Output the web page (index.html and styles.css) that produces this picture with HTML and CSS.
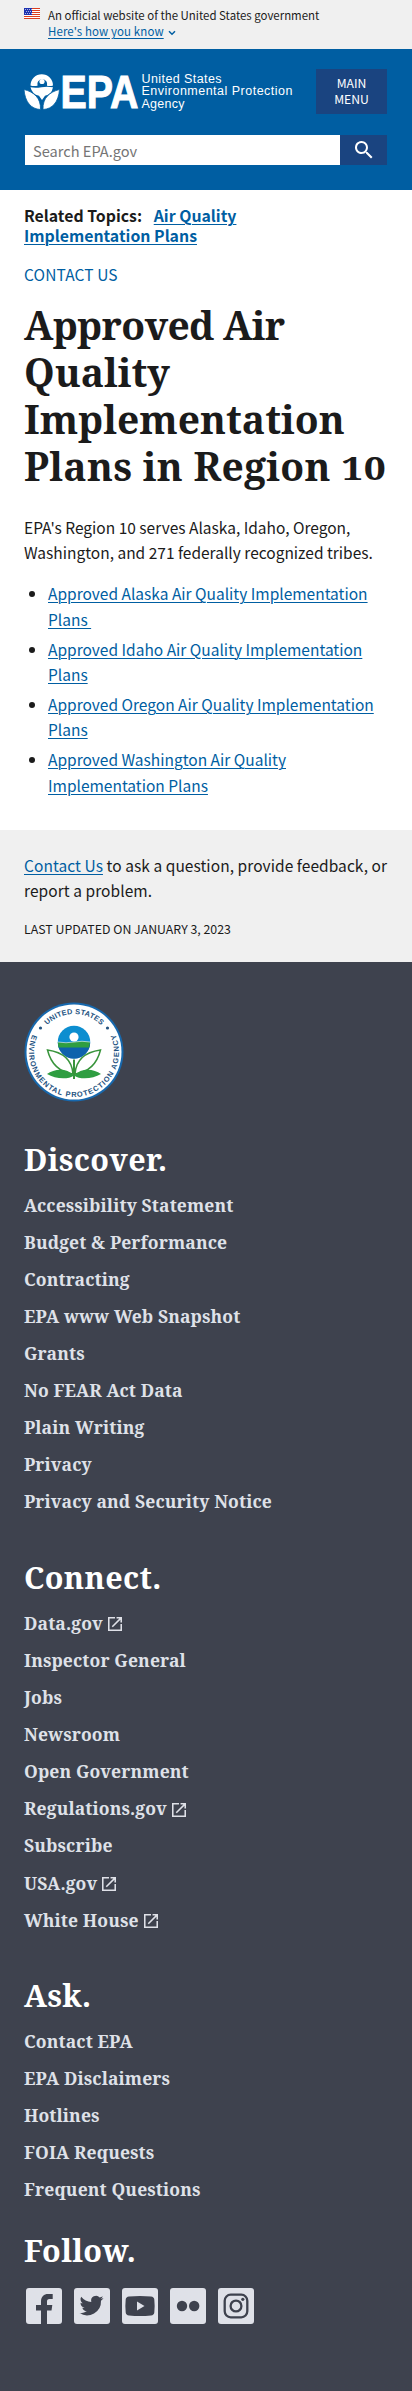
FILE: index.html
```html
<!DOCTYPE html>
<html lang="en">
<head>
<meta charset="utf-8">
<title>Approved Air Quality Implementation Plans in Region 10 | US EPA</title>
<link rel="stylesheet" href="styles.css">
</head>
<body>
<svg class="defs" aria-hidden="true">
  <symbol id="external" viewBox="3 3 18 18"><path d="M19 19H5V5h7V3H3v18h18v-9h-2v7zM14 3v2h3.600l-9.800 9.800 1.400 1.400L19 6.400V10h2V3h-7z"/></symbol>
</svg>
<section class="banner">
  <svg class="flag" viewBox="0 0 16 11">
    <path fill="#fff" d="M0 0h16v11H0z"/>
    <path fill="#db3e1f" d="M0 0h16v1H0zM0 2h16v1H0zM0 4h16v1H0zM0 6h16v1H0zM0 8h16v1H0zM0 10h16v1H0z"/>
    <path fill="#1e33b1" d="M0 0h8v7H0z"/>
    <path stroke="#fff" stroke-width=".8" stroke-dasharray=".8 1.200" d="M1 1.500h7M2 3.500h6M1 5.500h7"/>
  </svg>
  <div>
    <p>An official website of the United States government</p>
    <p><a class="know" href="#">Here's how you know</a><svg class="chev" viewBox="0 0 8 6"><path d="M1 1.300l3 3 3-3" fill="none" stroke="#005ea2" stroke-width="1.500"/></svg></p>
  </div>
</section>
<header class="header">
  <div class="top">
    <svg class="logo" viewBox="0 0 270 42">
      <g fill="#fff">
        <path d="M6.500 13.500a11 11 0 0 1 22.500 0q-3 1-6 .2a5 5 0 1 0-9.500 0q-4 .8-7-.2z"/>
        <circle cx="18" cy="9.500" r="2.600"/>
        <path d="M6.500 15.300q5 1 11-.1t11.500.100q-1.500 7.500-8 8.500L18 28l-3-4.200q-7-1.500-8.500-8.500z"/>
        <path d="M0 17.500C10 20 17 26 16.500 37.500 7 37 1 30 0 17.500zM35.500 17.500C25.500 20 18.500 26 19 37.500 28.500 37 34.500 30 35.500 17.500z" stroke="#005ea2" stroke-width=".8"/>
        <text class="word" x="36.500" y="35.500" textLength="78" lengthAdjust="spacingAndGlyphs">EPA</text>
        <g class="agency"><text x="117.500" y="10.700" textLength="80">United States</text><text x="117.500" y="23.300" textLength="151">Environmental Protection</text><text x="117.500" y="35.900" textLength="43">Agency</text></g>
      </g>
    </svg>
    <button class="menu">MAIN MENU</button>
  </div>
  <form class="search">
    <input type="text" placeholder="Search EPA.gov" aria-label="Search">
    <button type="button" aria-label="Search"><svg viewBox="0 0 24 24"><path fill="#fff" d="M15.500 14h-.8l-.3-.3A6.500 6.500 0 1 0 13.700 14.400l.3.300v.8l5 5 1.500-1.500zm-6 0a4.500 4.500 0 1 1 0-9 4.500 4.500 0 0 1 0 9z"/></svg></button>
  </form>
</header>
<main class="main">
  <p class="related">Related Topics: <a href="#">Air Quality<br>Implementation Plans</a></p>
  <p class="contact"><a href="#">CONTACT US</a></p>
  <h1><span class="tight">Approved Air</span><br>Quality<br>Implementation<br><span class="wide">Plans in Region <span class="num">10</span></span></h1>
  <p class="intro">EPA's Region 10 serves Alaska, Idaho, Oregon,<br>Washington, and 271 federally recognized tribes.</p>
  <ul class="plans">
    <li><a href="#">Approved Alaska Air Quality Implementation<br>Plans&nbsp;</a></li>
    <li><a href="#">Approved Idaho Air Quality Implementation<br>Plans</a></li>
    <li><a href="#">Approved Oregon Air Quality Implementation<br>Plans</a></li>
    <li><a href="#">Approved Washington Air Quality<br>Implementation Plans</a></li>
  </ul>
</main>
<section class="feedback">
  <p class="ask"><a href="#">Contact Us</a> to ask a question, provide feedback, or<br>report a problem.</p>
  <p class="updated">LAST UPDATED ON JANUARY 3, 2023</p>
</section>
<footer class="footer">
  <svg class="seal" viewBox="-50 -50 100 100">
    <circle r="49.500" fill="#1768ad"/><circle r="47.500" fill="#fff"/>
    <path id="arc-top" d="M-38 0A38 38 0 0 1 38 0" fill="none"/>
    <path id="arc-low" d="M-41.100-18.300A45 45 0 1 0 41.100-18.300" fill="none"/>
    <g class="ring"><text textLength="60"><textPath href="#arc-top" startOffset="29.700">UNITED STATES</textPath></text><text textLength="177"><textPath href="#arc-low" startOffset="1">ENVIRONMENTAL PROTECTION AGENCY</textPath></text></g>
    <circle cx="-33.500" cy="-24" r="1.600" fill="#24527f"/><circle cx="33.500" cy="-24" r="1.600" fill="#24527f"/>
    <circle cy="-10" r="16.200" fill="#0c8ed0"/>
    <path d="M-16.200-9.500a16.200 16.200 0 0 0 32.400 0z" fill="#0d62ac"/>
    <path d="M-16.200-10q8 1.500 16 0t16.200 0l-.9 5.500h-30.600z" fill="#2f9e41"/>
    <path d="M-16-10q8 1.500 16 0t16 0" fill="none" stroke="#fff" stroke-width=".6"/>
    <circle cy="-15" r="4.600" fill="#fff"/>
    <g fill="none" stroke="#38943b" stroke-width="1.500"><path d="M0 7.500V27" stroke-width="2"/><path d="M-1 22C-2 7-12 0-26.500-2-23 12-15 20-1 22zM1 22C2 7 12 0 26.500-2 23 12 15 20 1 22z"/></g>
    <path d="M0 23.500C-8 15-20 17-27 22c8 5 21 6 27 1.500 8-8.500 20-6.500 27-1.500-8 5-21 6-27 1.500z" fill="#2f9e41"/>
  </svg>
  <h2 class="discover">Discover.</h2>
  <ul>
    <li>Accessibility Statement</li><li>Budget &amp; Performance</li><li>Contracting</li><li>EPA www Web Snapshot</li><li>Grants</li><li>No FEAR Act Data</li><li>Plain Writing</li><li>Privacy</li><li>Privacy and Security Notice</li>
  </ul>
  <h2 class="connect">Connect.</h2>
  <ul>
    <li>Data.gov<svg class="ext"><use href="#external"/></svg></li><li>Inspector General</li><li>Jobs</li><li>Newsroom</li><li>Open Government</li><li>Regulations.gov<svg class="ext"><use href="#external"/></svg></li><li>Subscribe</li><li>USA.gov<svg class="ext"><use href="#external"/></svg></li><li>White House<svg class="ext"><use href="#external"/></svg></li>
  </ul>
  <h2 class="askus">Ask.</h2>
  <ul>
    <li>Contact EPA</li><li>EPA Disclaimers</li><li>Hotlines</li><li>FOIA Requests</li><li>Frequent Questions</li>
  </ul>
  <h2 class="follow">Follow.</h2>
  <div class="social">
    <svg viewBox="0 0 36 36"><rect width="36" height="36" rx="3" fill="#dfe1e8"/><path fill="#3e424e" d="M15 36V22.500h-5V17h5v-3.500C15 8.500 18 6 22 6h4.700v5H23.500C21.500 11 21 12 21 13.500V17h5.300l-.8 5.500H21V36z"/></svg>
    <svg viewBox="0 0 36 36"><rect width="36" height="36" rx="3" fill="#dfe1e8"/><path fill="#3e424e" transform="translate(5.500 5.500)" d="M24 4.600a10 10 0 0 1-2.800.8 4.900 4.900 0 0 0 2.100-2.700 9.800 9.800 0 0 1-3.100 1.200A4.900 4.900 0 0 0 11.800 8.400 14 14 0 0 1 1.700 3.200a4.900 4.900 0 0 0 1.500 6.600 4.900 4.900 0 0 1-2.200-.6v.1a4.900 4.900 0 0 0 4 4.800 5 5 0 0 1-2.200.1 4.900 4.900 0 0 0 4.600 3.400A9.900 9.900 0 0 1 0 19.600a14 14 0 0 0 21.500-12.400A10 10 0 0 0 24 4.600z"/></svg>
    <svg viewBox="0 0 36 36"><rect width="36" height="36" rx="3" fill="#dfe1e8"/><path fill="#3e424e" d="M7 8.500q11-1.200 22 0 3 .3 3.300 3 .7 6 0 13-.3 2.700-3.300 3-11 1.200-22 0-3-.3-3.300-3-.7-6.500 0-13 .3-2.700 3.300-3z"/><path fill="#dfe1e8" d="M15 13.500v9l7.500-4.500z"/></svg>
    <svg viewBox="0 0 36 36"><rect width="36" height="36" rx="3" fill="#dfe1e8"/><circle cx="12" cy="18" r="5.200" fill="#3e424e"/><circle cx="24.200" cy="18" r="5.200" fill="#3e424e"/></svg>
    <svg viewBox="0 0 36 36"><rect width="36" height="36" rx="3" fill="#dfe1e8"/><g fill="none" stroke="#3e424e" stroke-width="2.300"><rect x="6.700" y="6.700" width="22.600" height="22.600" rx="6"/><circle cx="18" cy="18" r="5.400"/></g><circle cx="24.800" cy="11.300" r="1.600" fill="#3e424e"/></svg>
  </div>
</footer>
</body>
</html>
```

FILE: styles.css
```css
* { box-sizing: border-box; }
body, p, h1, h2, ul { margin: 0; padding: 0; }
body {
  background: #fff;
  color: #1b1b1b;
  font: 15.5px/25.4px "Noto Sans CJK SC", "Noto Sans", sans-serif;
}
a { color: #005ea2; text-underline-offset: 2px; text-decoration-thickness: 1px; }
svg { display: block; }
.defs { width: 0; height: 0; display: none; }

.banner {
  display: flex;
  gap: 8px;
  height: 49px;
  padding: 7px 24px 0;
  background: #f0f0f0;
  font-size: 11.45px;
  line-height: 16px;
}
.flag { width: 16px; height: 11px; margin-top: 1px; }
.know { letter-spacing: .12px; }
.chev { display: inline-block; width: 8px; height: 6px; margin-left: 4px; }

.header { height: 141px; padding: 20px 25px 0 24px; background: #005ea2; }
.top { display: flex; justify-content: space-between; height: 45px; }
.logo { width: 270px; height: 42px; margin-top: 3px; flex: none; }
.word { font: bold 46px "Liberation Sans", sans-serif; stroke: #fff; stroke-width: 1; }
.agency { font: 12.5px "Liberation Sans", sans-serif; }
.menu {
  width: 71px;
  height: 45px;
  margin: 0;
  padding: 0 16px 1px;
  border: 0;
  background: #1a4480;
  color: #fff;
  font: 12.2px/16px "Noto Sans CJK SC", sans-serif;
}
.search { display: flex; margin: 21px 0 0 1px; height: 30px; }
.search input {
  width: 315px;
  height: 30px;
  padding: 0 8px;
  border: 0;
  font: 14.6px "Noto Sans CJK SC", sans-serif;
}
.search input::placeholder { color: #757575; }
.search button {
  display: flex;
  align-items: center;
  justify-content: center;
  width: 47px;
  padding: 0;
  border: 0;
  background: #1a4480;
}
.search svg { width: 24px; height: 24px; }

.main { height: 640px; padding: 15.5px 24px 0; white-space: nowrap; }
.related { font-weight: bold; font-size: 15.85px; line-height: 20px; }
.related a { margin-left: 8px; }
.contact { margin-top: 18.5px; line-height: 20px; }
.contact a { text-decoration: none; letter-spacing: .12px; }
h1 { margin-top: 16.7px; font: bold 39px/47px "Noto Serif", serif; }
.tight { letter-spacing: -.7px; }
.wide { letter-spacing: .3px; }
.num { display: inline-block; line-height: 1; transform: scaleY(.82); transform-origin: 0 79%; }
.intro { margin-top: 26px; }
.plans { margin-top: 15.6px; padding-left: 24px; }
.plans li { margin-bottom: 4.6px; }

.feedback { height: 132px; padding: 22.5px 24px 0; background: #f0f0f0; white-space: nowrap; }
.ask { line-height: 25.8px; letter-spacing: .06px; }
.updated { margin-top: 14.5px; font-size: 12.35px; line-height: 20px; }

.footer { height: 1429px; padding: 40px 24px 0; background: #3e424e; color: #dfe1e8; }
.seal { width: 100px; height: 100px; }
.ring { font: bold 7.4px "Liberation Sans", sans-serif; fill: #24527f; }
h2 { color: #fff; font: bold 30.5px/40px "Noto Serif", serif; letter-spacing: .35px; }
.discover { margin-top: 37px; }
.connect { margin-top: 37px; }
.askus { margin-top: 36.5px; }
.follow { margin-top: 22px; }
.footer ul { margin-top: 7.5px; list-style: none; font: bold 17.5px/37.1px "Noto Serif", serif; letter-spacing: .12px; }
.footer li { display: flex; align-items: center; height: 37.1px; }
.ext { width: 14px; height: 14px; margin: 2px 0 0 5px; fill: #dfe1e8; }
.social { display: flex; gap: 12px; margin: 18px 0 0 2px; }
.social svg { width: 36px; height: 36px; }
```
